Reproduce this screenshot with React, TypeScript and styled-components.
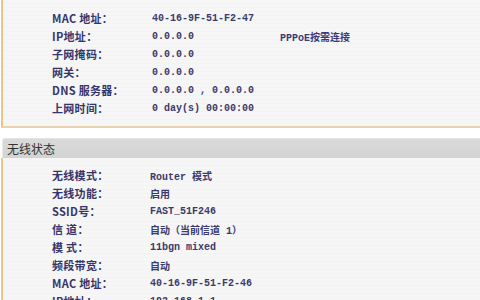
import React from 'react';
import styled, { createGlobalStyle } from 'styled-components';

const GlobalStyle = createGlobalStyle`
    html, body {
        margin: 0;
        padding: 0;
        background: #ffffff;
        overflow: hidden;
    }
    * {
        box-sizing: border-box;
    }
`;

const Page = styled.div`
    width: 480px;
    height: 300px;
    overflow: hidden;
    display: flex;
    flex-direction: column;
`;

const Panel = styled.div<{ $last?: boolean }>`
    flex-shrink: 0;
    margin: 0 0 0 1px;
    padding: ${(p) => (p.$last ? '8px 0 0 0' : '9px 0 9px 0')};
    background: repeating-linear-gradient(
        to bottom,
        #f6f6f6 0px,
        #f6f6f6 3px,
        #f3f3f3 3px,
        #f3f3f3 4px
    );
    border-left: 2px solid #f1c487;
    border-bottom: ${(p) => (p.$last ? 'none' : '2px solid #e9d2b0')};
    box-shadow: ${(p) => (p.$last ? 'none' : '0 2px 0 #fdf6e0')};
`;

const Row = styled.div<{ $valueAt: number }>`
    height: 18px;
    display: grid;
    grid-template-columns: ${(p) => `${p.$valueAt - 3}px 128px 1fr`};
    align-items: center;
    padding-left: 49px;
    white-space: nowrap;
`;

const Label = styled.span`
    font-family: 'Noto Sans CJK SC', 'Liberation Mono', monospace;
    font-size: 11px;
    font-weight: 700;
    color: #35356a;
    letter-spacing: 0.3px;
`;

const Value = styled.span`
    font-family: 'Liberation Mono', 'Noto Sans CJK SC', monospace;
    font-size: 10px;
    font-weight: 700;
    color: #3a3a6c;
`;

const Extra = styled.span`
    font-family: 'Liberation Mono', 'Noto Sans CJK SC', monospace;
    font-size: 10px;
    font-weight: 700;
    color: #3a3a7a;
`;

const Gap = styled.div`
    flex-shrink: 0;
    height: 10px;
    background: #ffffff;
`;

const SectionHeader = styled.div`
    flex-shrink: 0;
    height: 20px;
    margin-left: 2px;
    padding-left: 4px;
    display: flex;
    align-items: center;
    background: linear-gradient(to bottom, #dadada, #d3d3d3);
    border-top: 1px solid #e4e4e4;
    border-left: 1px solid #eaeaea;
    border-radius: 3px 0 0 0;
    font-family: 'Noto Sans CJK SC', sans-serif;
    font-size: 12px;
    color: #333333;
`;

type Item = { label: string; value: string; extra?: string };

const wan: Item[] = [
    { label: 'MAC 地址：', value: '40-16-9F-51-F2-47' },
    { label: 'IP地址：', value: '0.0.0.0', extra: 'PPPoE按需连接' },
    { label: '子网掩码：', value: '0.0.0.0' },
    { label: '网关：', value: '0.0.0.0' },
    { label: 'DNS 服务器：', value: '0.0.0.0 , 0.0.0.0' },
    { label: '上网时间：', value: '0 day(s) 00:00:00' },
];

const wireless: Item[] = [
    { label: '无线模式：', value: 'Router 模式' },
    { label: '无线功能：', value: '启用' },
    { label: 'SSID号：', value: 'FAST_51F246' },
    { label: '信 道：', value: '自动（当前信道 1）' },
    { label: '模 式：', value: '11bgn mixed' },
    { label: '频段带宽：', value: '自动' },
    { label: 'MAC 地址：', value: '40-16-9F-51-F2-46' },
    { label: 'IP地址：', value: '192.168.1.1' },
];

const Rows = (props: { items: Item[]; valueAt: number }): JSX.Element => (
    <>
        {props.items.map((it, i) => (
            <Row key={i} $valueAt={props.valueAt}>
                <Label>{it.label}</Label>
                <Value>{it.value}</Value>
                {it.extra ? <Extra>{it.extra}</Extra> : <span />}
            </Row>
        ))}
    </>
);

const App = (): JSX.Element => (
    <Page>
        <GlobalStyle />
        <Panel>
            <Rows items={wan} valueAt={103} />
        </Panel>
        <Gap />
        <SectionHeader>无线状态</SectionHeader>
        <Panel $last>
            <Rows items={wireless} valueAt={101} />
        </Panel>
    </Page>
);

export default App;
